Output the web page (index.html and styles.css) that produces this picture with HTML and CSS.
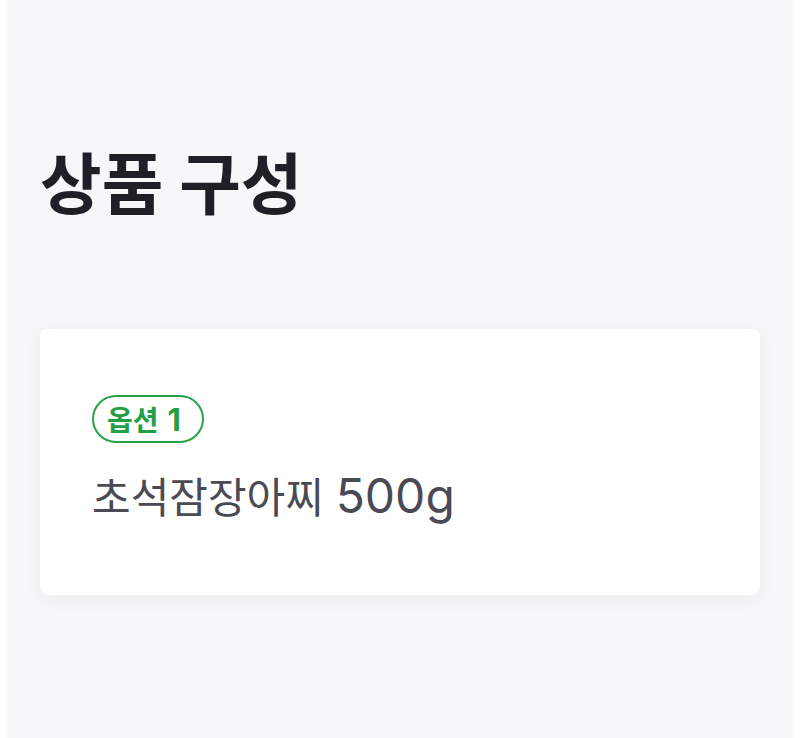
FILE: index.html
```html
<!DOCTYPE html>
<html lang="ko">
<head>
<meta charset="utf-8">
<link rel="stylesheet" href="styles.css">
</head>
<body>
<section class="composition">
  <h2 class="title">상품 구성</h2>
  <div class="card">
    <span class="badge">옵션 <span class="latin">1</span></span>
    <p class="item">초석잠장아찌 <span class="latin">500g</span></p>
  </div>
</section>
</body>
</html>
```
FILE: styles.css
```css
html, body {
  margin: 0;
  padding: 0;
  background: #ffffff;
}
body {
  font-family: "Inter", "Noto Sans CJK KR", "Noto Sans", sans-serif;
  height: 738px;
  overflow: hidden;
}
.composition {
  margin: 0 7px;
  min-height: 738px;
  background: #f7f7f9;
  padding: 140px 33px 0;
  box-sizing: border-box;
}
.title {
  margin: 0;
  font-size: 67px;
  font-weight: 700;
  line-height: 90px;
  color: #1f1f27;
}
.card {
  margin-top: 99px;
  background: #ffffff;
  border-radius: 8px;
  box-shadow: 0 4px 20px rgba(0, 0, 0, 0.05);
  padding: 66px 52px 69px;
  display: flex;
  flex-direction: column;
  align-items: flex-start;
}
.badge {
  display: inline-flex;
  align-items: center;
  gap: 9px;
  height: 48px;
  box-sizing: border-box;
  padding: 0 21px 0 13px;
  border: 2px solid #27a347;
  border-radius: 999px;
  color: #23a046;
  font-size: 28px;
  font-weight: 700;
}
.badge .latin {
  font-size: 31px;
}
.item {
  margin: 25px 0 0;
  font-size: 42px;
  line-height: 56px;
  color: #4a4a55;
}
.item .latin {
  font-size: 48px;
}
```
